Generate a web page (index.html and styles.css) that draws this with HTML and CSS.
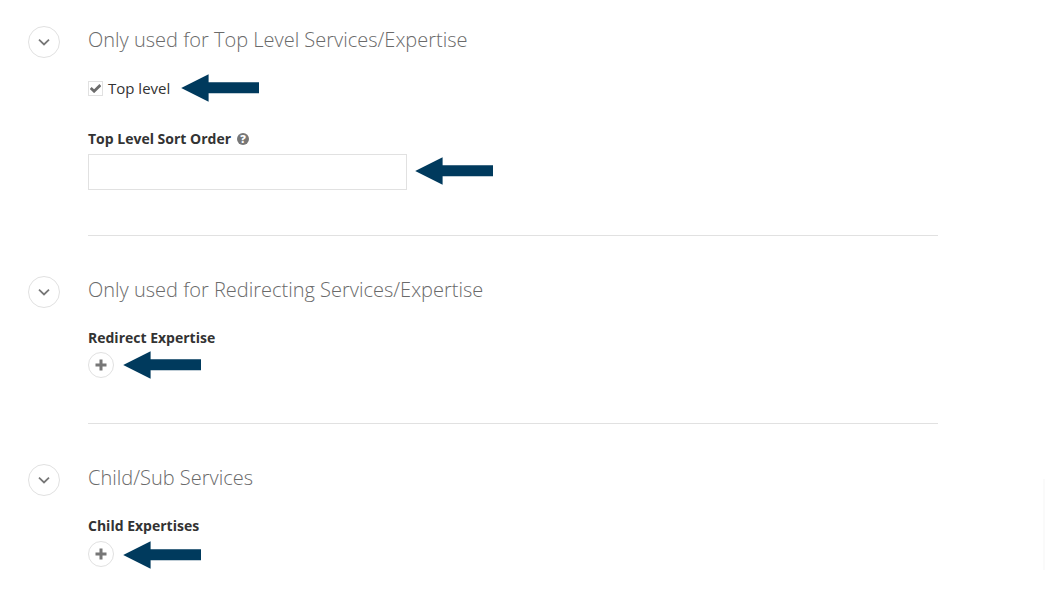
FILE: index.html
```html
<!DOCTYPE html>
<html lang="en">
    <head>
        <meta charset="UTF-8">
        <meta name="viewport" content="width=device-width, initial-scale=1.0">

        <title>Services/Expertise</title>
        <link rel="stylesheet" href="styles.css">
    </head>
    <body>
        <svg class="symbols">
            <symbol id="arrow" viewBox="0 0 78 28">
                <path d="M0.2 14 L27.6 0.3 V8.3 H78 V19.2 H27.6 V27.7 Z" fill="#003a5d"/>
            </symbol>
            <symbol id="chevron" viewBox="0 0 12 8">
                <path d="M1 1.7 L6 6.5 L11 1.7" fill="none" stroke="#777" stroke-width="1.8"/>
            </symbol>
            <symbol id="plus" viewBox="0 0 12 12">
                <path d="M4.5 0.5 H7.5 V4.5 H11.5 V7.5 H7.5 V11.5 H4.5 V7.5 H0.5 V4.5 H4.5 Z" fill="#777"/>
            </symbol>
        </svg>

        <section class="group top-level">
            <button class="toggle"><svg class="chevron"><use href="#chevron"/></svg></button>
            <div class="content">
                <h2>Only used for Top Level Services/Expertise</h2>
                <div class="check-row">
                    <span class="checkbox"><svg viewBox="0 0 11 9"><path d="M0.7 4 L4.1 7.2 L10.4 1.1" fill="none" stroke="#6c6c6c" stroke-width="2.8"/></svg></span>
                    <label>Top level</label>
                    <svg class="arrow"><use href="#arrow"/></svg>
                </div>
                <div class="field-label">
                    <label for="sort">Top Level Sort Order</label>
                    <span class="help">?</span>
                </div>
                <div class="input-row">
                    <input type="text" id="sort">
                    <svg class="arrow"><use href="#arrow"/></svg>
                </div>
            </div>
        </section>

        <section class="group redirect">
            <button class="toggle"><svg class="chevron"><use href="#chevron"/></svg></button>
            <div class="content">
                <h2>Only used for Redirecting Services/Expertise</h2>
                <div class="field-label"><label>Redirect Expertise</label></div>
                <div class="add-row">
                    <button class="add"><svg><use href="#plus"/></svg></button>
                    <svg class="arrow"><use href="#arrow"/></svg>
                </div>
            </div>
        </section>

        <section class="group child">
            <button class="toggle"><svg class="chevron"><use href="#chevron"/></svg></button>
            <div class="content">
                <h2>Child/Sub Services</h2>
                <div class="field-label"><label>Child Expertises</label></div>
                <div class="add-row">
                    <button class="add"><svg><use href="#plus"/></svg></button>
                    <svg class="arrow"><use href="#arrow"/></svg>
                </div>
            </div>
        </section>

        <div class="side-tab"></div>
    </body>
</html>
```
FILE: styles.css
```css
* {
    box-sizing: border-box;
}

body {
    font-family: "Open Sans", sans-serif;
    margin: 0;
    padding: 26px 0 0 28px;
    background-color: white;
    color: #333;
    overflow: hidden;
}

svg {
    display: block;
}

.symbols {
    display: none;
}

.group {
    display: flex;
    gap: 28px;
}

.top-level {
    height: 250px;
}

.redirect {
    height: 188px;
}

.content {
    width: 850px;
}

.top-level .content {
    height: 210px;
    border-bottom: 1px solid #e1e1e1;
}

.redirect .content {
    height: 148px;
    border-bottom: 1px solid #e1e1e1;
}

.toggle {
    flex: none;
    width: 32px;
    height: 32px;
    padding: 0;
    display: flex;
    align-items: center;
    justify-content: center;
    border: 1px solid #e1e1e1;
    border-radius: 50%;
    background-color: white;
}

.chevron {
    width: 12px;
    height: 8px;
}

h2 {
    margin: 0;
    font-size: 20px;
    font-weight: 300;
    line-height: 28px;
    color: #6a6a6a;
}

.check-row {
    display: flex;
    align-items: center;
    height: 28px;
    margin-top: 20px;
    font-size: 15px;
}

.checkbox {
    width: 15px;
    height: 15px;
    margin-right: 5px;
    padding: 2px 1px;
    border: 1px solid #e1e1e1;
}

.checkbox svg {
    width: 11px;
    height: 9px;
}

.arrow {
    width: 78px;
    height: 28px;
    flex: none;
}

.check-row .arrow {
    margin-left: 11px;
}

.field-label {
    display: flex;
    align-items: center;
    height: 20px;
    font-size: 14px;
    font-weight: 700;
}

.top-level .field-label {
    margin-top: 26px;
}

.redirect .field-label, .child .field-label {
    margin-top: 23px;
}

.help {
    width: 12px;
    height: 12px;
    margin: 2px 0 0 6px;
    border-radius: 50%;
    background-color: #777;
    color: white;
    font-size: 11px;
    font-weight: 800;
    line-height: 12px;
    text-align: center;
}

.input-row {
    display: flex;
    align-items: center;
    gap: 8px;
    margin-top: 6px;
}

.input-row .arrow {
    margin-bottom: 2px;
}

input {
    width: 319px;
    height: 36px;
    border: 1px solid #e1e1e1;
}

.add-row {
    display: flex;
    align-items: center;
    gap: 9px;
    margin-top: 4px;
}

.child .add-row {
    align-items: flex-end;
    margin-top: 6px;
}

.child .add {
    margin-bottom: 2px;
}

.add {
    width: 26px;
    height: 26px;
    padding: 0;
    display: flex;
    align-items: center;
    justify-content: center;
    border: 1px solid #e1e1e1;
    border-radius: 50%;
    background-color: white;
}

.add svg {
    width: 12px;
    height: 12px;
}

/* faint edge of the panel tucked behind the right side */
.side-tab {
    position: absolute;
    top: 479px;
    right: 0;
    width: 2px;
    height: 91px;
    background-color: #fafafa;
}
```
